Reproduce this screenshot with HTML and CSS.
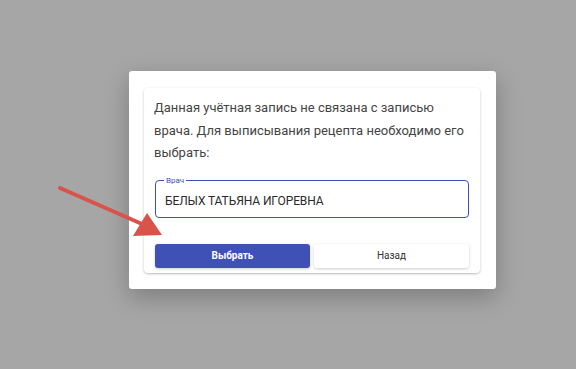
FILE: index.html
```html
<!DOCTYPE html>
<html lang="ru">

<head>
    <meta charset="UTF-8">
    <meta name="viewport" content="width=device-width, initial-scale=1.0">
    <title>Выбор врача</title>
    <link rel="stylesheet" href="styles.css">
</head>

<body>
    <div class="overlay">
        <div class="dialog">
            <div class="card">
                <p class="message">Данная учётная запись не связана с записью врача. Для выписывания рецепта необходимо его выбрать:</p>
                <fieldset class="field">
                    <legend>Врач</legend>
                    <div class="value">БЕЛЫХ ТАТЬЯНА ИГОРЕВНА</div>
                </fieldset>
                <div class="actions">
                    <button class="btn primary">Выбрать</button>
                    <button class="btn">Назад</button>
                </div>
            </div>
        </div>
    </div>
    <svg class="pointer" width="120" height="70" viewBox="0 0 120 70">
        <line x1="10" y1="8" x2="92" y2="44" stroke="#d9534a" stroke-width="4" stroke-linecap="round" />
        <polygon points="97,33 112,55 83,56" fill="#d9534a" />
    </svg>
</body>

</html>
```

FILE: styles.css
```css
body {
    margin: 0;
    background: #a6a6a6;
    font-family: Roboto, "Liberation Sans", sans-serif;
}

.overlay {
    width: 576px;
    height: 369px;
    display: flex;
    justify-content: flex-start;
    align-items: flex-start;
    padding: 71px 0 0 129px;
    box-sizing: border-box;
}

.dialog {
    width: 367px;
    background: #fff;
    border-radius: 3px;
    padding: 17px 16px 16px 15px;
    box-sizing: border-box;
    box-shadow: 0 8px 24px rgba(0, 0, 0, 0.25);
}

.card {
    background: #fff;
    border-radius: 4px;
    padding: 9px 11px 5px 11px;
    box-shadow: 0 1px 3px rgba(0, 0, 0, 0.2), 0 1px 1px rgba(0, 0, 0, 0.08);
}

.message {
    margin: 0 0 0 -1px;
    font-size: 13px;
    line-height: 22.5px;
    color: #444;
}

.field {
    margin: 12px 0 0 0;
    padding: 0 9px 9px 9px;
    border: 1px solid #3f51b5;
    border-radius: 4px;
    height: 41px;
    box-sizing: border-box;
}

.field legend {
    font-size: 8px;
    color: #3f51b5;
    padding: 0 2px;
    margin-left: -1px;
    line-height: 8px;
}

.value {
    font-size: 12px;
    letter-spacing: -0.1px;
    color: #2a2a2a;
    margin-top: 9px;
}

.actions {
    display: flex;
    gap: 4px;
    margin-top: 26px;
}

.btn {
    flex: 1;
    height: 24px;
    border: none;
    border-radius: 3px;
    background: #fff;
    color: #333;
    font-family: Roboto, "Liberation Sans", sans-serif;
    font-size: 10px;
    font-weight: 400;
    box-shadow: 0 1px 3px rgba(0, 0, 0, 0.2);
    cursor: pointer;
}

.btn.primary {
    background: #3f51b5;
    color: #fff;
    font-weight: 700;
}

.pointer {
    position: absolute;
    left: 50px;
    top: 180px;
}
```
